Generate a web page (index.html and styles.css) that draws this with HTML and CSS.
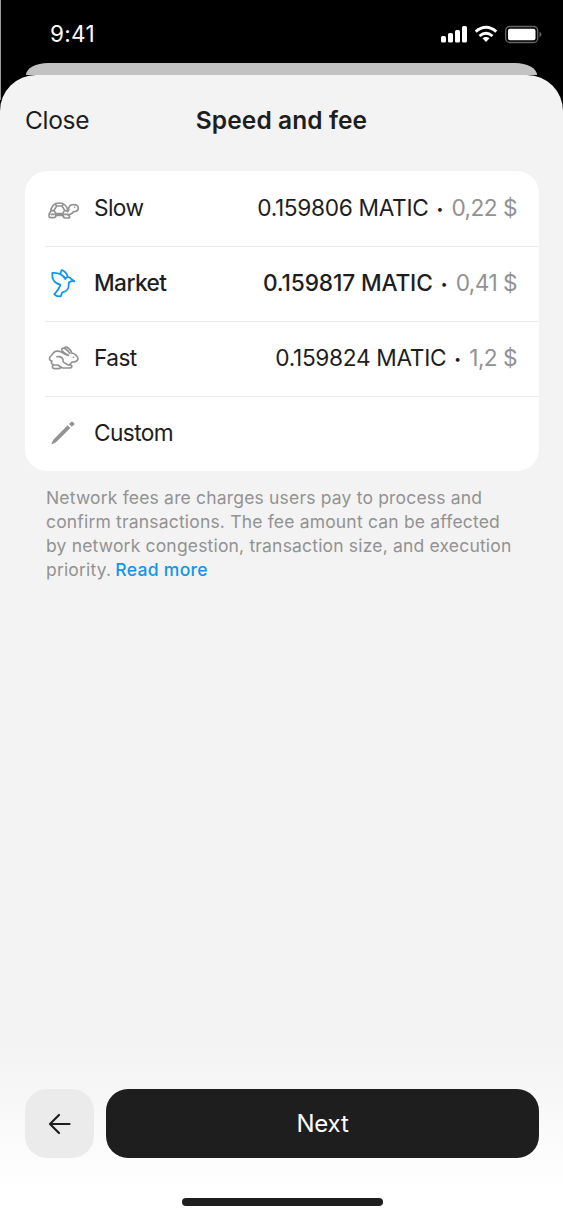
FILE: index.html
```html
<!DOCTYPE html>
<html lang="en">
<head>
<meta charset="utf-8">
<title>Speed and fee</title>
<link rel="stylesheet" href="styles.css">
</head>
<body>
<div class="phone">
  <header class="status">
    <span class="time">9:41</span>
    <svg class="status-icons" viewBox="0 0 102 20" aria-hidden="true">
      <g fill="#fff">
        <rect x="1" y="12" width="5" height="6.5" rx="1.5"/><rect x="8" y="9" width="5" height="9.5" rx="1.5"/><rect x="15" y="6" width="5" height="12.5" rx="1.5"/><rect x="22" y="2" width="5" height="16.5" rx="1.5"/>
        <path d="M42.500 14.200 46 18 49.500 14.200Q46 11.600 42.500 14.200Z"/>
        <rect x="68" y="4.800" width="27.500" height="11.500" rx="2"/>
      </g>
      <g fill="none" stroke="#fff" stroke-width="2.900"><path d="M35.700 7.600Q46-.9 56.300 7.600"/><path d="M39.500 12Q46 6.600 52.500 12"/></g>
      <rect x="65.700" y="2.500" width="32" height="16" rx="4" fill="none" stroke="#666" stroke-width="1.300"/>
      <path d="M99.500 8v5q2-.6 2-2.500t-2-2.500Z" fill="#666"/>
    </svg>
  </header>
  <div class="behind"></div>
  <main class="sheet">
    <div class="nav">
      <span class="close">Close</span>
      <h1 class="title">Speed and fee</h1>
      <span></span>
    </div>
    <ul class="options">
      <li class="option">
        <svg class="icon" viewBox="0 0 96 96" aria-hidden="true"><path d="M8 56C10 39 19 30 34 30S57 39 60 54M22 34l4 5-8 13-9 2M46 34l-4 5 8 13 9 2M26 39H42M18 52l6 10H44l6-10M8 56C1 62 1 74 9 74H17C21 74 24 71 24 67H45C45 72 48 75 53 75H61C67 75 66 69 60 66C67 65 73 62 76 56C85 56 91 53 91 45S82 34 75 35C65 35 61 43 62 51L59 56M9 64H24L28 67M41 67L45 64H61"/><circle cx="80" cy="43" r="2.300" fill="currentColor" stroke="none"/></svg>
        <span class="name">Slow</span>
        <span class="amount">0.159806 MATIC</span><span class="dot">•</span><span class="fiat">0,22 $</span>
      </li>
      <li class="option selected">
        <svg class="icon" viewBox="0 0 96 96" aria-hidden="true"><path d="M13 15C11 33 20 47 37 50C36 59 30 66 19 79C25 85 32 86 39 84L42 74C56 71 64 60 62 46C64 41 69 38 79 40L69 32C64 26 56 26 52 33C45 20 29 14 13 15ZM37 19C38 12 40 7 42 6C50 10 58 18 59 27"/></svg>
        <span class="name">Market</span>
        <span class="amount">0.159817 MATIC</span><span class="dot">•</span><span class="fiat">0,41 $</span>
      </li>
      <li class="option">
        <svg class="icon" viewBox="0 0 96 96" aria-hidden="true"><path d="M27 41C40 39 47 47 45 55C49 62 54 60 60 66H66C74 67 73 75 66 75H44L29 66H18C11 67 12 76 19 77H30Q38 77 38 72M16 65C8 61 10 56 12 54C2 52 2 43 10 38C16 26 27 21 40 27C47 32 54 35 61 37M61 37C50 32 37 21 42 17C49 12 59 22 65 31M49 15C55 8 69 19 71 30C81 31 90 41 90 48C88 56 80 57 73 57C69 60 67 63 64 66"/><circle cx="76" cy="43" r="2.500" fill="currentColor" stroke="none"/></svg>
        <span class="name">Fast</span>
        <span class="amount">0.159824 MATIC</span><span class="dot">•</span><span class="fiat">1,2 $</span>
      </li>
      <li class="option">
        <svg class="icon" viewBox="0 0 96 96" aria-hidden="true"><path fill="currentColor" stroke="none" d="M59 22 67 30 24 73 12 79Q10 78 11 76L16 65ZM63 18 68 13Q72 9 77 14T76 22L71 26Z"/></svg>
        <span class="name">Custom</span>
      </li>
    </ul>
    <p class="note">Network fees are charges users pay to process and<br>confirm transactions. The fee amount can be affected<br>by network congestion, transaction size, and execution<br>priority. <a class="more">Read more</a></p>
    <footer class="footer">
      <div class="actions">
        <button class="back" aria-label="Back"><svg class="arrow" viewBox="0 0 24 24" aria-hidden="true"><path d="M21.500 12H2M11 3 2 12 11 21"/></svg></button>
        <button class="next">Next</button>
      </div>
      <div class="home"></div>
    </footer>
  </main>
</div>
</body>
</html>
```
FILE: styles.css
```css
* { box-sizing: border-box; }
body { margin: 0; background: #000; font-family: Inter, "Liberation Sans", sans-serif; color: #1e1e1e; }
.phone { height: 1218px; display: flex; flex-direction: column; background: linear-gradient(#999, #999) 0 0 / 1px 100px no-repeat #000; }
.status { height: 63px; flex: none; display: flex; justify-content: space-between; padding: 20px 21px 0 50px; }
.time { color: #fff; font-size: 22.5px; line-height: 28px; font-weight: 400; letter-spacing: .3px; }
.status-icons { width: 102px; height: 20px; margin-top: 4px; }
.behind { flex: none; height: 12px; margin: 0 26px; background: #c2c2c2; border-radius: 22px 22px 0 0 / 12px 12px 0 0; }
.sheet { flex: 1; display: flex; flex-direction: column; background: #f3f3f3; border-radius: 36px 36px 0 0; padding-top: 28px; }
.nav { display: grid; grid-template-columns: 1fr auto 1fr; align-items: center; height: 34px; padding: 0 25px; }
.close { font-size: 24.5px; letter-spacing: -.3px; }
.title { margin: 0; font-size: 24.5px; font-weight: 600; letter-spacing: .1px; }
.options { list-style: none; margin: 34px 24px 0 25px; padding: 0; height: 300px; border-radius: 22px; background: #fff; }
.option { height: 75px; margin-left: 20px; padding: 0 22px 1px 3px; display: flex; align-items: center; box-shadow: 0 1px #ececec; font-size: 22.7px; line-height: 28px; }
.option:last-child { box-shadow: none; }
.icon { width: 32px; height: 32px; margin: 1px 14px 0 0; color: #929292; fill: none; stroke: currentColor; stroke-width: 5; stroke-linejoin: round; stroke-linecap: round; }
.selected .icon { color: #1098f0; stroke-width: 5.5; }
.name { margin-right: auto; letter-spacing: -.6px; }
.amount { letter-spacing: -.33px; }
.selected .name, .selected .amount { font-weight: 500; }
.selected .amount { letter-spacing: -.15px; }
.dot { width: 23px; text-align: center; font-size: 12px; padding-top: 2px; }
.fiat { color: #929292; letter-spacing: -.55px; }
.note { margin: 15px 24px 0 46px; font-size: 17.5px; line-height: 24px; letter-spacing: .18px; color: #929292; white-space: nowrap; }
.more { color: #1095f0; font-weight: 500; letter-spacing: .3px; margin-left: -1px; }
.footer { margin-top: auto; height: 171px; padding: 42px 24px 0 25px; background: linear-gradient(#f3f3f3, #fff 85%); }
.actions { display: flex; gap: 12px; }
button { border: 0; padding: 0; font-family: inherit; height: 69px; border-radius: 22px; }
.back { width: 69px; background: #ebebeb; display: flex; align-items: center; justify-content: center; }
.arrow { width: 24px; height: 24px; margin-right: 0; fill: none; stroke: #1e1e1e; stroke-width: 2.2; stroke-linecap: round; stroke-linejoin: round; }
.next { flex: 1; background: #1e1e1e; color: #fff; font-size: 24px; letter-spacing: -.2px; }
.home { width: 201px; height: 8px; border-radius: 4px; background: #1e1e1e; margin: 40px auto 0; }
```
